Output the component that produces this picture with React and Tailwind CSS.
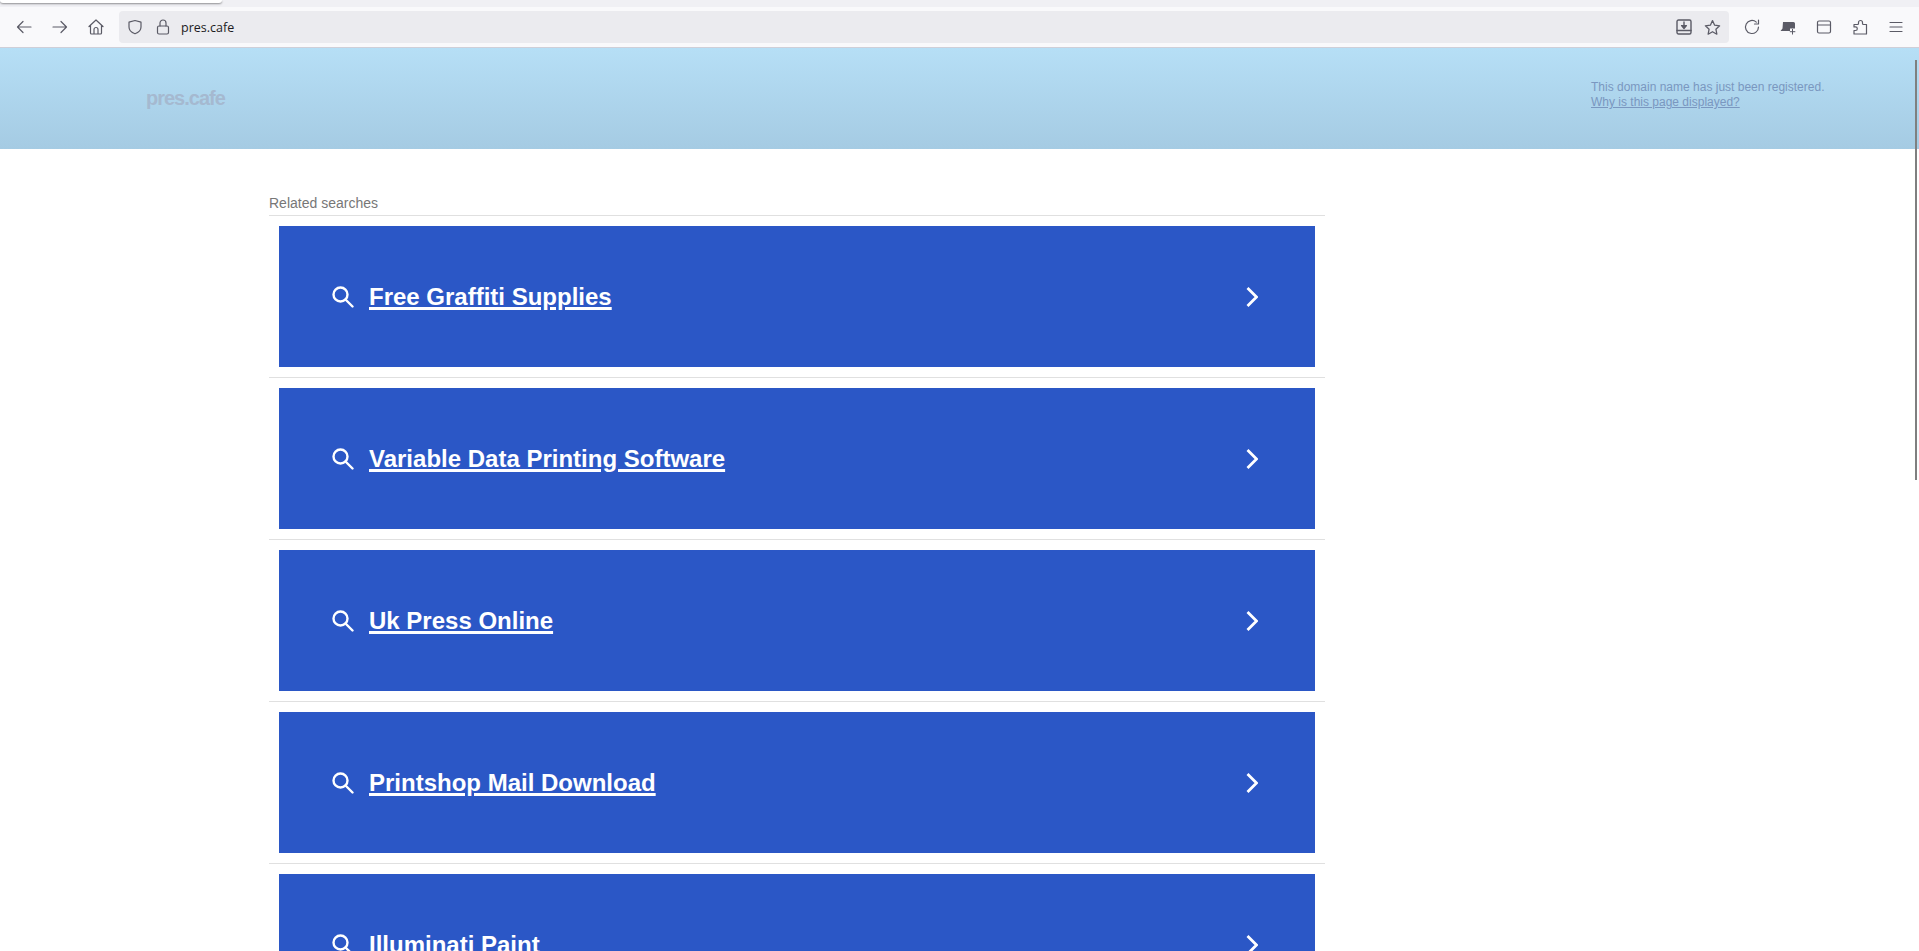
const searches = [
  "Free Graffiti Supplies",
  "Variable Data Printing Software",
  "Uk Press Online",
  "Printshop Mail Download",
  "Illuminati Paint",
];

function Icon({ children, className = "" }) {
  return (
    <svg
      viewBox="0 0 16 16"
      fill="none"
      stroke="currentColor"
      strokeWidth="1.2"
      strokeLinecap="round"
      strokeLinejoin="round"
      className={"h-4 w-4 shrink-0 text-[#5b5b66] " + className}
    >
      {children}
    </svg>
  );
}

function Toolbar() {
  return (
    <div className="relative z-10 flex h-[41px] items-center border-b border-[#cfcfd8] bg-[#f9f9fb] font-['Open_Sans',sans-serif]">
      <div className="flex w-[119px] items-center gap-[20px] pl-[16px]">
        <Icon>
          <path d="M15 8H1.5M7 2.5 1.5 8 7 13.5" />
        </Icon>
        <Icon>
          <path d="M1 8h13.5M9 2.5 14.5 8 9 13.5" />
        </Icon>
        <Icon>
          <path d="M1 7.5 8 1l7 6.500M2.500 6.500V14a1 1 0 0 0 1 1h9a1 1 0 0 0 1-1V6.500M6 15v-4.500a2 2 0 0 1 4 0V15" />
        </Icon>
      </div>
      <div className="flex h-[32px] w-[1610px] items-center rounded-[4px] bg-[#ebebef] pl-[8px] pr-[8px]">
        <Icon>
          <path d="M8 1.500 14 3.200V8c0 3.500-2.800 5.700-6 6.800C4.800 13.700 2 11.500 2 8V3.200L8 1.500Z" />
        </Icon>
        <Icon className="ml-[12px]">
          <rect x="2.500" y="7" width="11" height="8" rx="1.500" />
          <path d="M5 7V4a3 3 0 0 1 6 0v3" />
        </Icon>
        <span className="ml-[10px] mt-[2px] text-[12.500px] text-[#1c1b22]">pres.cafe</span>
        <Icon className="ml-auto">
          <rect x="1" y="1" width="14" height="14" rx="1.500" strokeWidth="1.400" />
          <path d="M1 11.500h14M8 3v5.500" strokeWidth="1.400" />
          <path d="M5.500 6.500h5L8 9.500Z" fill="currentColor" />
        </Icon>
        <Icon className="ml-[12px] h-[17px] w-[17px]">
          <path d="m8 1.500 2 4.300 4.700.6-3.500 3.200.9 4.700L8 12l-4.100 2.300.9-4.700L1.300 6.400 6 5.800 8 1.500Z" />
        </Icon>
      </div>
      <div className="flex flex-1 items-center gap-[20px] pl-[15px]">
        <Icon>
          <path d="M14.500 8A6.500 6.500 0 1 1 12.300 3.100M14.500 1v4h-4" />
        </Icon>
        <svg viewBox="0 0 16 16" className="h-4 w-4 shrink-0 text-[#5b5b66]" fill="currentColor">
          <path d="M3 3h10.500A1.500 1.500 0 0 1 15 4.500V9.500H10V12H.5L2.500 9.500 3 3Z" />
          <path d="M12.500 10v5.500M9.800 12.700h5.500" stroke="currentColor" strokeWidth="1" fill="none" />
        </svg>
        <Icon>
          <rect x="1.500" y="2" width="13" height="12" rx="1.500" />
          <path d="M1.500 6h13" />
        </Icon>
        <Icon>
          <path d="M2 5.500h3.500c.6 0 1-.4 1-1V3.500a2 2 0 0 1 4 0v1c0 .6.4 1 1 1h3V15H2v-3.500h1.500a1.800 1.800 0 0 0 0-3.600H2V5.500Z" />
        </Icon>
        <Icon>
          <path d="M2 3.500h12M2 8h12M2 12.500h12" />
        </Icon>
      </div>
    </div>
  );
}

function SearchCard({ text }) {
  return (
    <div className="border-b border-[#e0e0e0] px-[10px] py-[10px]">
      <a
        href="#"
        className="flex h-[141px] items-center bg-[#2b57c6] pl-[53px] pr-[57px] text-white"
      >
        <svg
          viewBox="0 0 22 22"
          fill="none"
          stroke="currentColor"
          strokeWidth="2.400"
          strokeLinecap="round"
          className="h-[22px] w-[22px] shrink-0"
        >
          <circle cx="8.500" cy="8.500" r="7" />
          <path d="m13.500 13.500 7 7" />
        </svg>
        <span className="ml-[15px] text-[24px] font-bold underline decoration-[2.500px]">{text}</span>
        <svg
          viewBox="0 0 12 20"
          fill="none"
          stroke="currentColor"
          strokeWidth="2.800"
          className="ml-auto h-[20px] w-[12px] shrink-0"
        >
          <path d="m1.500 1 9 9-9 9" />
        </svg>
      </a>
    </div>
  );
}

export default function App() {
  return (
    <div className="relative h-[951px] overflow-hidden bg-white font-['Liberation_Sans',sans-serif]">
      <div className="h-[7px] bg-[#f0f0f4]">
        <div className="h-[3px] w-[222px] rounded-b-[4px] bg-white shadow-[0_1px_2px_rgba(0,0,0,0.4)]" />
      </div>
      <Toolbar />
      <header className="flex h-[101px] bg-gradient-to-b from-[#b6dff6] to-[#a5cbe3]">
        <div className="w-[146px] shrink-0" />
        <div className="pt-[35px] text-[20px] font-bold tracking-[-1px] text-[#a5b9d0]">pres.cafe</div>
        <div className="ml-auto w-[328px] pt-[32px] text-[12px] leading-[15px] text-[#7a97c0]">
          <p>This domain name has just been registered.</p>
          <a href="#" className="underline">Why is this page displayed?</a>
        </div>
      </header>
      <main className="ml-[269px] w-[1056px] pt-[45px]">
        <div className="border-b border-[#e0e0e0] pb-[3px] text-[14px] leading-[18px] text-[#777777]">
          Related searches
        </div>
        {searches.map((text) => (
          <SearchCard key={text} text={text} />
        ))}
      </main>
      <div className="absolute right-[2px] top-[60px] h-[420px] w-[2px] bg-[#7f7f7f]" />
    </div>
  );
}
